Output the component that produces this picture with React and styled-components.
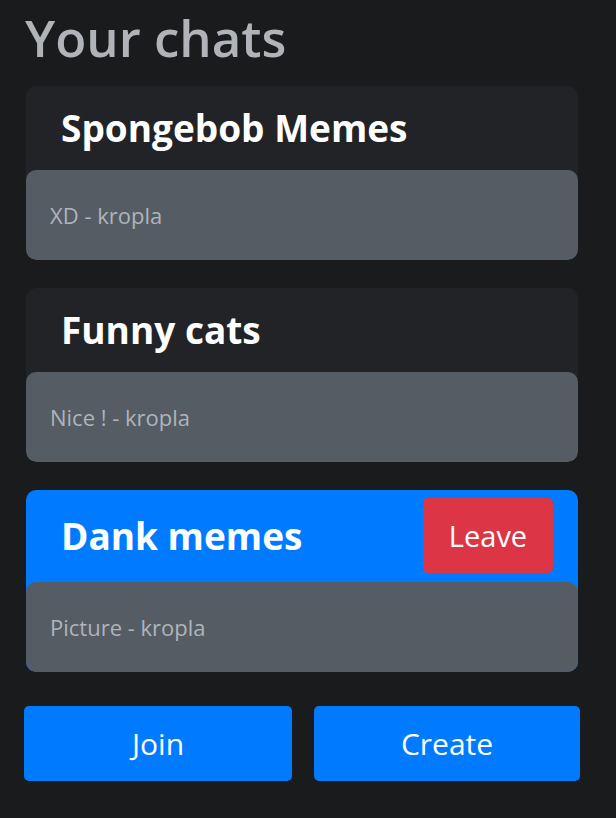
import React from "react";
import styled, { createGlobalStyle } from "styled-components";

const chats = [
  { id: 1, name: "Spongebob Memes", last: "XD - kropla" },
  { id: 2, name: "Funny cats", last: "Nice ! - kropla" },
  { id: 3, name: "Dank memes", last: "Picture - kropla", selected: true },
];

export default function App() {
  return (
    <>
      <GlobalStyle />
      <Page>
        <Title>Your chats</Title>
        <ChatList>
          {chats.map((chat) => (
            <ChatCard key={chat.id} $selected={chat.selected}>
              <ChatHeader>
                <ChatName>{chat.name}</ChatName>
                {chat.selected && <LeaveButton>Leave</LeaveButton>}
              </ChatHeader>
              <LastMessage>{chat.last}</LastMessage>
            </ChatCard>
          ))}
        </ChatList>
        <Actions>
          <ActionButton>Join</ActionButton>
          <ActionButton>Create</ActionButton>
        </Actions>
      </Page>
    </>
  );
}

const GlobalStyle = createGlobalStyle`
  *, *::before, *::after {
    box-sizing: border-box;
  }
  body {
    margin: 0;
    background-color: #1a1b1d;
    font-family: "Open Sans", "Noto Sans", sans-serif;
  }
`;

const Page = styled.div`
  width: 616px;
  padding: 0 36px 0 24px;
  display: flex;
  flex-direction: column;
`;

const Title = styled.h1`
  margin: 3px 0 15px 1px;
  font-size: 51px;
  line-height: 68px;
  font-weight: 600;
  color: #b0b4b8;
`;

const ChatList = styled.div`
  display: flex;
  flex-direction: column;
  gap: 28px;
  padding: 0 2px;
`;

const ChatCard = styled.div`
  background-color: ${(p) => (p.$selected ? "#007bff" : "#222326")};
  border-radius: 10px;
  overflow: hidden;
  display: flex;
  flex-direction: column;
`;

const ChatHeader = styled.div`
  min-height: 84px;
  padding: 8px 25px 9px 35px;
  display: flex;
  align-items: center;
  justify-content: space-between;
`;

const ChatName = styled.h3`
  margin: 0;
  font-size: 37px;
  line-height: 46px;
  font-weight: 700;
  color: #ffffff;
`;

const LeaveButton = styled.button`
  width: 130px;
  height: 75px;
  border: none;
  border-radius: 5px;
  background-color: #dc3545;
  color: #ffffff;
  font-family: inherit;
  font-size: 29px;
  cursor: pointer;
`;

const LastMessage = styled.div`
  height: 90px;
  padding: 0 24px;
  display: flex;
  align-items: center;
  background-color: #565c64;
  border-radius: 10px;
  color: #aeb4ba;
  font-size: 22px;
`;

const Actions = styled.div`
  margin-top: 34px;
  display: grid;
  grid-template-columns: 268px 266px;
  gap: 22px;
`;

const ActionButton = styled.button`
  height: 75px;
  border: none;
  border-radius: 5px;
  background-color: #007bff;
  color: #ffffff;
  font-family: inherit;
  font-size: 30px;
  cursor: pointer;
`;
